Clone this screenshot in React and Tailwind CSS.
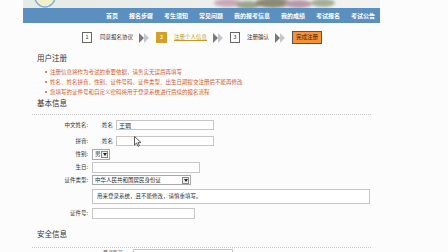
import React from "react";

const navItems = ["首页", "报名步骤", "考生须知", "常见问题", "我的报考信息", "我的成绩", "考试报名", "考试公告"];

const notes = [
  "注册信息将作为考试的重要依据，请务实无误后再填写",
  "姓名、姓名拼音、性别、证件号码、证件类型、出生日期提交注册后不能再修改",
  "您填写的证件号和自定义密码将用于登录系统进行后续的报名流程",
];

const Arrows = () => (
  <svg width="11" height="10" viewBox="0 0 11 10" className="mx-[6px]">
    <path d="M0 0 L5 5 L0 10 Z" fill="#7a7a7a" />
    <path d="M5 0 L10 5 L5 10 Z" fill="#c4c8cc" />
  </svg>
);

const Banner = () => (
  <svg width="357" height="8" viewBox="0 0 357 8" className="block">
    <defs>
      <linearGradient id="bg" x1="0" x2="1" y1="0" y2="0">
        <stop offset="0" stopColor="#e6ebe8" />
        <stop offset="0.5" stopColor="#ecefec" />
        <stop offset="1" stopColor="#f2f2f0" />
      </linearGradient>
      <filter id="blur">
        <feGaussianBlur stdDeviation="1.6" />
      </filter>
    </defs>
    <rect width="357" height="8" fill="url(#bg)" />
    <circle cx="22" cy="-3" r="10" fill="#f3efc8" stroke="#7fb0cf" strokeWidth="1.5" />
    <g filter="url(#blur)">
      <ellipse cx="205" cy="3" rx="14" ry="4" fill="#c9a9b8" />
      <ellipse cx="225" cy="5" rx="12" ry="4" fill="#9aa48a" />
      <ellipse cx="250" cy="3" rx="18" ry="5" fill="#8a8a74" />
      <ellipse cx="275" cy="4" rx="14" ry="4" fill="#b79aa8" />
      <ellipse cx="300" cy="3" rx="12" ry="4" fill="#a6ad98" />
    </g>
  </svg>
);

const Label = ({ children }) => (
  <div className="w-[66px] shrink-0 text-right pr-[1px] text-[5.5px] text-[#333]">{children}</div>
);

const Input = ({ className, children }) => (
  <div className={"border border-[#c6c6c6] bg-white flex items-center px-[2px] text-[6px] text-[#222] " + className}>
    {children}
  </div>
);

const Select = ({ className, text }) => (
  <div className={"border border-[#a8a8a8] bg-white flex items-center justify-between pl-[2px] pr-[1px] text-[5.5px] text-[#222] " + className}>
    <span>{text}</span>
    <span className="w-[7px] h-[7px] border border-[#888] bg-[#eee] flex items-center justify-center">
      <svg width="4" height="3" viewBox="0 0 4 3">
        <path d="M0 0 L4 0 L2 3 Z" fill="#222" />
      </svg>
    </span>
  </div>
);

export default function App() {
  return (
    <div
      className="w-[448px] h-[252px] overflow-hidden bg-[#fcfcfc] relative"
      style={{ fontFamily: '"Noto Sans CJK SC", "Noto Sans", sans-serif' }}
    >
      <div className="ml-[23px] w-[357px]">
        <Banner />
        <div className="h-[15px] bg-[#5a8fbf] flex items-center justify-end gap-[11px] pr-[5px] text-[6px] text-white font-bold">
          {navItems.map((n) => (
            <span key={n}>{n}</span>
          ))}
        </div>

        <div className="mt-[8px] h-[13px] flex items-center pl-[59px] text-[5.5px] text-[#333]">
          <span className="w-[10px] h-[11px] border border-[#666] bg-white flex items-center justify-center">1</span>
          <span className="ml-[8px]">同意报名协议</span>
          <Arrows />
          <span className="w-[11px] h-[11px] bg-[#d3a12a] text-white flex items-center justify-center">2</span>
          <span className="ml-[7px] text-[#c99a22] underline">注册个人信息</span>
          <Arrows />
          <span className="w-[10px] h-[11px] border border-[#666] bg-white flex items-center justify-center">3</span>
          <span className="ml-[7px]">注册确认</span>
          <Arrows />
          <span className="w-[30px] h-[13px] border border-[#555] bg-[#f7923a] text-[#3a2000] flex items-center justify-center">完成注册</span>
        </div>

        <div className="mt-[9px] pl-[14px] text-[7.5px] leading-[10px] text-[#333]">用户注册</div>
        <ul className="mt-[4px] pl-[22px] text-[5.5px] leading-[10px] text-[#d0602a]">
          {notes.map((t) => (
            <li key={t} className="flex items-center">
              <span className="w-[2px] h-[2px] rounded-full bg-[#d0602a] mr-[3px]" />
              {t}
            </li>
          ))}
        </ul>
        <div className="mt-[1px] pl-[14px] text-[7.5px] leading-[10px] text-[#333]">基本信息</div>
        <div className="mt-[6px] ml-[9px] w-[339px] border-t border-dotted border-[#c8c8c8]" />

        <div className="mt-[5px] flex items-center">
          <Label>中文姓名:</Label>
          <span className="ml-[13px] w-[14px] text-[5.5px] text-[#333]">姓名</span>
          <Input className="w-[98px] h-[10px] border-[#a9c3dc]">王琱</Input>
        </div>
        <div className="mt-[6px] flex items-center">
          <Label>拼音:</Label>
          <span className="ml-[13px] w-[14px] text-[5.5px] text-[#333]">姓名</span>
          <Input className="w-[98px] h-[10px]" />
        </div>
        <div className="mt-[3px] flex items-center">
          <Label>性别:</Label>
          <Select className="ml-[3px] w-[18px] h-[11px]" text="男" />
        </div>
        <div className="mt-[2px] flex items-center">
          <Label>生日:</Label>
          <Input className="ml-[3px] w-[108px] h-[11px]" />
        </div>
        <div className="mt-[2px] flex items-center">
          <Label>证件类型:</Label>
          <Select className="ml-[3px] w-[99px] h-[10px]" text="中华人民共和国居民身份证" />
        </div>
        <div className="mt-[4px] ml-[69px] w-[278px] h-[15px] border border-[#c6c6c6] bg-white flex items-center pl-[4px] text-[5.5px] text-[#333]">
          用来登录系统，且不能修改，请慎重填写。
        </div>
        <div className="mt-[4px] flex items-center">
          <Label>证件号:</Label>
          <Input className="ml-[3px] w-[103px] h-[11px]" />
        </div>

        <div className="mt-[10px] pl-[14px] text-[7.5px] leading-[10px] text-[#333]">安全信息</div>
        <div className="mt-[8px] ml-[9px] w-[339px] border-t border-dotted border-[#c8c8c8]" />
        <div className="mt-[1px] flex items-start h-[6px]">
          <div className="w-[100px] text-right text-[5px] leading-[6px] text-[#333]">登录账号</div>
          <Input className="ml-[10px] w-[100px] h-[10px]" />
        </div>
      </div>

      <svg width="8" height="11" viewBox="0 0 8 11" className="absolute left-[134px] top-[136px]">
        <path d="M0.5 0.5 L0.5 9 L2.6 7 L4 10.3 L5.4 9.7 L4 6.6 L7 6.6 Z" fill="#fff" stroke="#333" strokeWidth="0.8" />
      </svg>
    </div>
  );
}
